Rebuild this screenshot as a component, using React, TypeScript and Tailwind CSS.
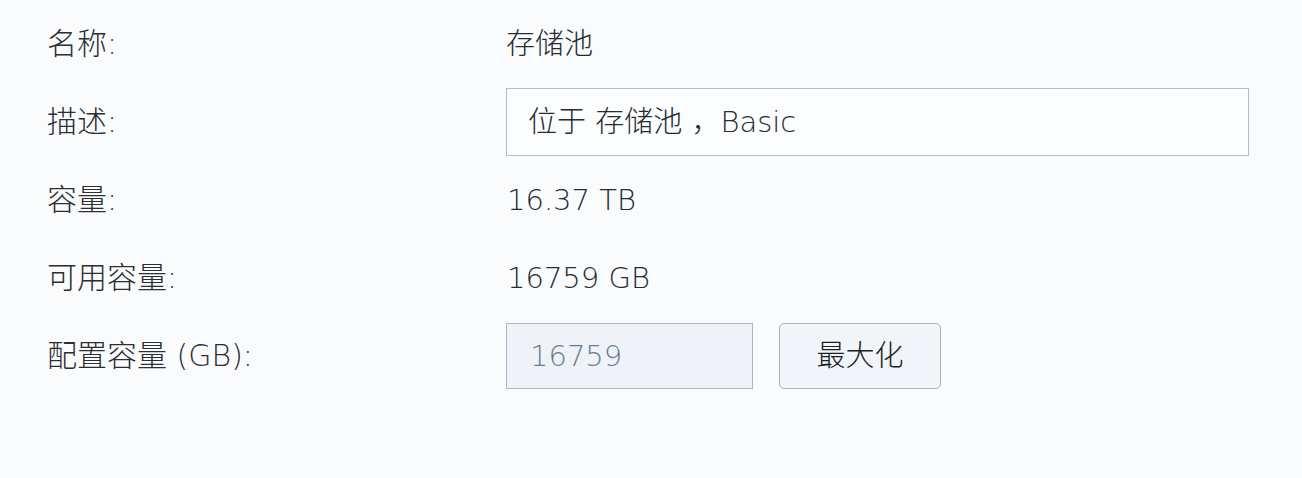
const font = 'font-["DejaVu_Sans","Noto_Sans_CJK_SC",sans-serif]';

interface FieldRowProps {
  label: string;
  children: React.ReactNode;
}

/** One label / value line of the pool form. */
function FieldRow({ label, children }: FieldRowProps) {
  return (
    <div className="flex h-[68px] items-center">
      <div className="w-[459px] shrink-0 text-[30px] text-[#2c2e31]">{label}</div>
      <div className="flex flex-1 items-center">{children}</div>
    </div>
  );
}

export default function App() {
  return (
    <div
      className={`${font} h-[478px] w-[1302px] bg-[#fafbfd] pl-[47px] pt-[10px] text-[29px] font-light leading-none text-[#262b31]`}
    >
      <div className="flex flex-col gap-[10px]">
        <FieldRow label="名称:">
          <span>存储池</span>
        </FieldRow>

        <FieldRow label="描述:">
          <div className="flex h-[68px] w-[743px] items-center border border-[#b3bec8] bg-[#fcfdfe] pl-[21px]">
            位于 存储池 ，Basic
          </div>
        </FieldRow>

        <FieldRow label="容量:">
          <span className="pl-[1px]">16.37 TB</span>
        </FieldRow>

        <FieldRow label="可用容量:">
          <span className="pl-[1px]">16759 GB</span>
        </FieldRow>

        <FieldRow label="配置容量 (GB):">
          <div className="flex items-center gap-[26px]">
            <div className="flex h-[66px] w-[247px] items-center border border-[#a9b5c2] bg-[#eff3f7] pl-[23px] text-[#6a7c94]">
              16759
            </div>
            <button
              type="button"
              className="flex h-[66px] w-[162px] items-center justify-center rounded-[5px] border border-[#a9b4c1] bg-[#f1f5f9] text-[#1d2024]"
            >
              最大化
            </button>
          </div>
        </FieldRow>
      </div>
    </div>
  );
}
